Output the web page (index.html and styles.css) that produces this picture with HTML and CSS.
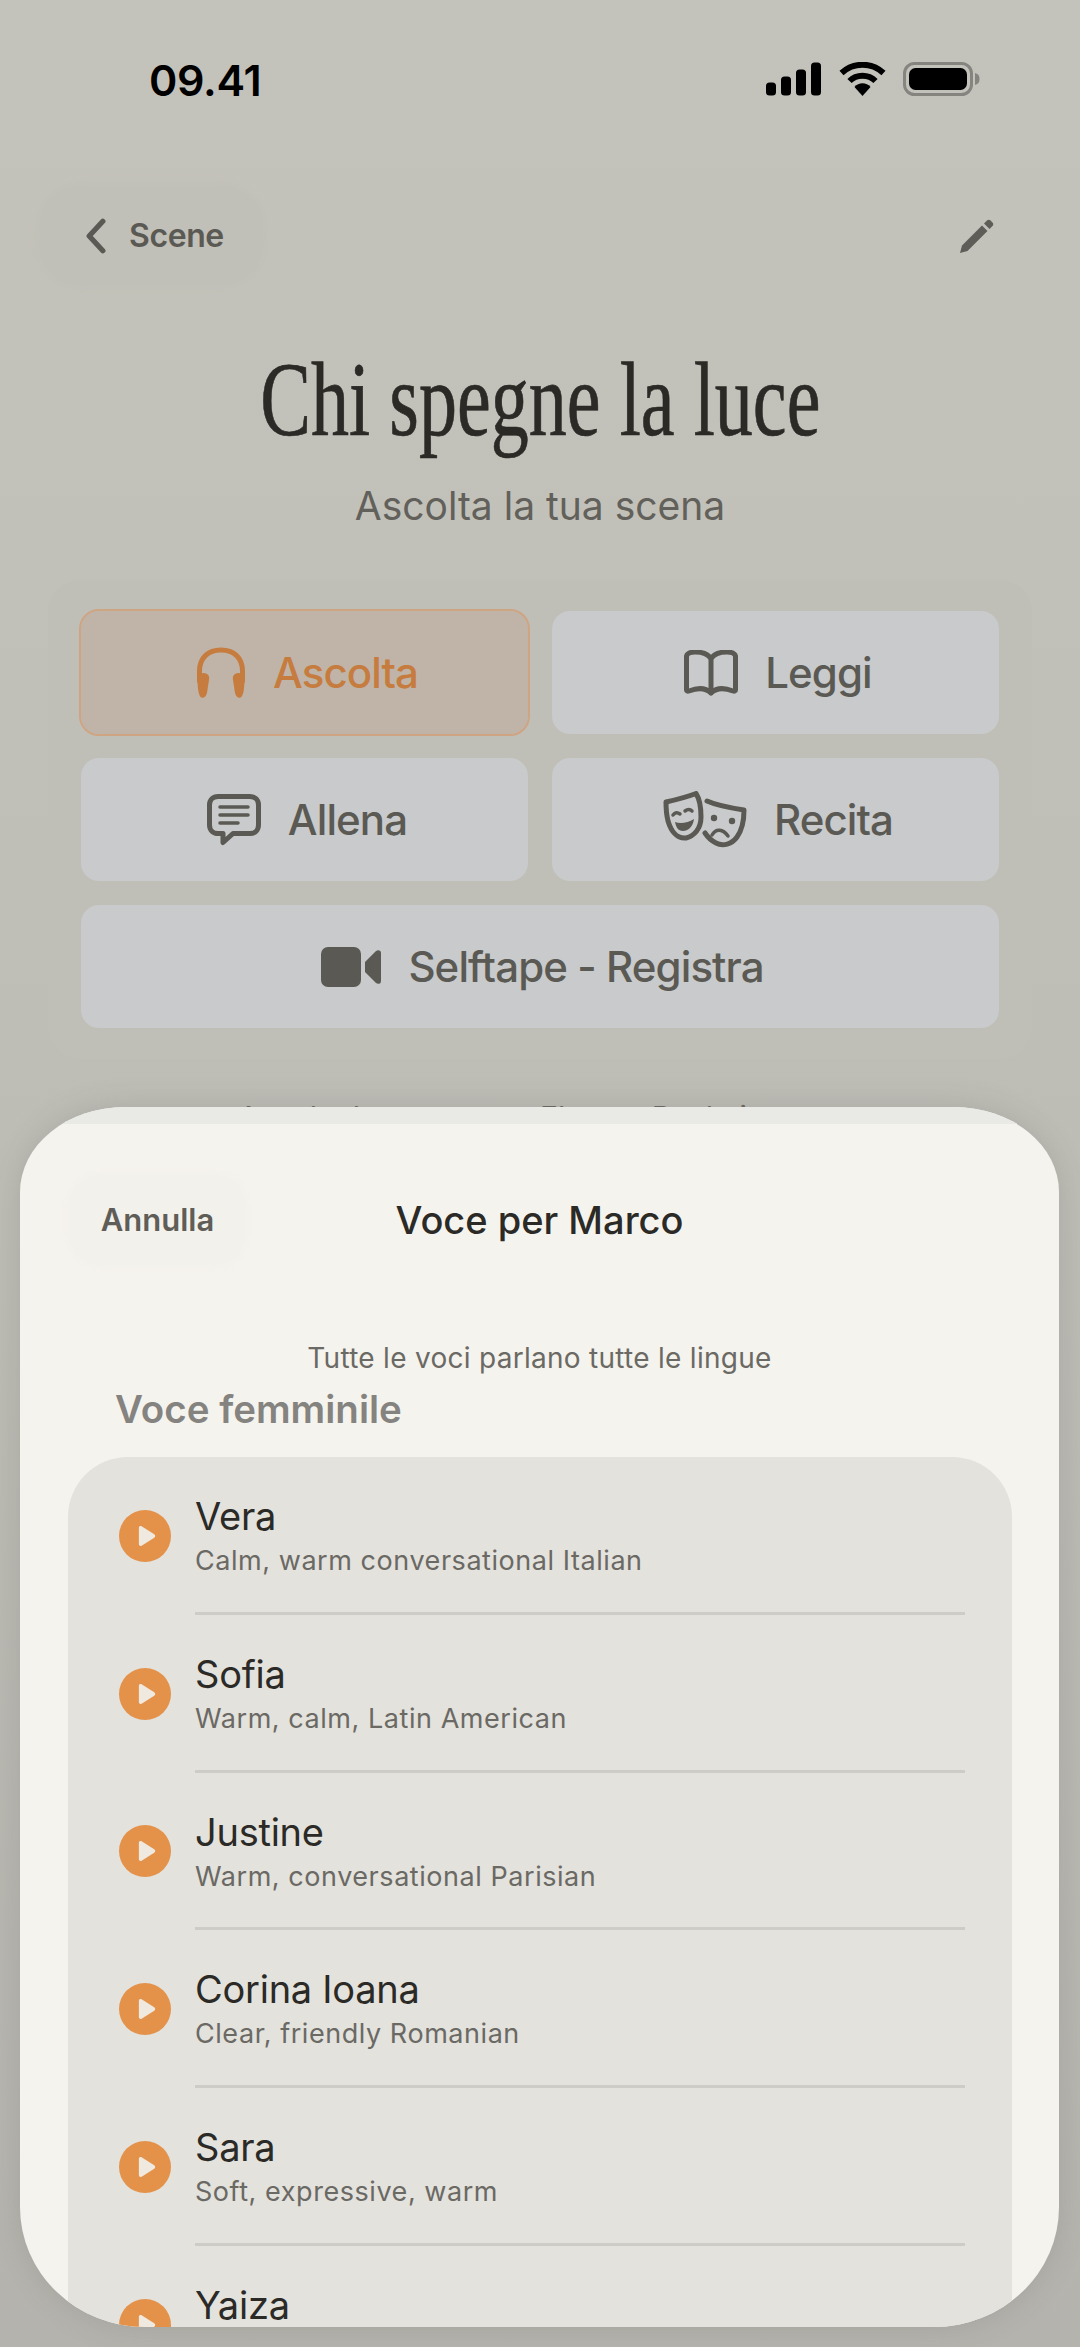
FILE: index.html
```html
<!DOCTYPE html>
<html lang="it">
<head>
    <meta charset="UTF-8">
    <title>Chi spegne la luce</title>
    <link rel="stylesheet" href="styles.css">
</head>
<body>
    <div class="status">
        <span class="time">09.41</span>
        <div class="status-icons">
            <svg class="ic-signal" viewBox="0 0 56 33"><rect x="0" y="20" width="10" height="13" rx="3.5"/><rect x="15" y="14" width="10" height="19" rx="3.5"/><rect x="30" y="7" width="10" height="26" rx="3.5"/><rect x="45" y="0" width="10" height="33" rx="3.5"/></svg>
            <svg class="ic-wifi" viewBox="0 0 48 34"><path d="M3 11 C15 0 33 0 45 11" class="wifi-arc"/><path d="M11 19 C18 12 30 12 37 19" class="wifi-arc"/><path d="M16 25 C20 20 28 20 32 25 L24 34 Z"/></svg>
            <svg class="ic-battery" viewBox="0 0 77 34"><rect x="1.5" y="1.5" width="67" height="31" rx="10" fill="none" stroke="#85847f" stroke-width="3"/><rect x="6" y="6" width="58" height="22" rx="6.5"/><path d="M72 11 C75.500 12 76.500 14 76.500 17 C76.500 20 75.500 22 72 23 Z" fill="#85847f"/></svg>
        </div>
    </div>

    <nav class="nav">
        <div class="back">
            <svg class="ic-chevron" viewBox="0 0 20 34"><path d="M17 3 L4 17 L17 31"/></svg>
            <span>Scene</span>
        </div>
        <svg class="ic-pencil" viewBox="0 0 36 36"><path d="M1 35 L3 27.500 L23 7.500 L28.500 13 L8.500 33 Z"/><path d="M25 5.500 L28 2.500 C29 1.500 30.500 1.500 31.500 2.500 L33.500 4.500 C34.500 5.500 34.500 7 33.500 8 L30.500 11 Z"/></svg>
    </nav>

    <header class="head">
        <h1><span>Chi spegne la luce</span></h1>
        <p>Ascolta la tua scena</p>
    </header>

    <main class="modes">
        <div class="mode selected">
            <svg class="ic-phones" viewBox="0 0 50 52"><path d="M3.500 34 V24 C3.500 11 12 3 25 3 C38 3 46.500 11 46.500 24 V34" class="line"/><path d="M1.500 31 C3 26 8 25 11 27 C13 28 13.500 30 13 33 L11 46 C10 50 7.500 51.500 5.500 50.500 C3 49.500 1.500 44 1.500 31 Z" class="fill"/><path d="M48.500 31 C47 26 42 25 39 27 C37 28 36.500 30 37 33 L39 46 C40 50 42.500 51.500 44.500 50.500 C47 49.500 48.500 44 48.500 31 Z" class="fill"/></svg>
            <span>Ascolta</span>
        </div>
        <div class="mode">
            <svg class="ic-book" viewBox="0 0 54 46"><path d="M27 9 C24 3 18 2 11 2 C7 2 3.500 3 2.500 6 V40 C2.500 41 3.500 41.500 5 41 C14 37.500 22 38 27 43 C32 38 40 37.500 49 41 C50.500 41.500 51.500 41 51.500 40 V6 C50.500 3 47 2 43 2 C36 2 30 3 27 9 Z M27 9 V43" class="line"/></svg>
            <span>Leggi</span>
        </div>
        <div class="mode">
            <svg class="ic-chat" viewBox="0 0 54 52"><path d="M11 2.500 H43 C48 2.500 51.500 6 51.500 11 V31 C51.500 36 48 39.500 43 39.500 H26 L16 48.500 V39.500 H11 C6 39.500 2.500 36 2.500 31 V11 C2.500 6 6 2.500 11 2.500 Z" class="line"/><path d="M13 13 H41 M13 21 H41 M13 29 H31" class="line thin"/></svg>
            <span>Allena</span>
        </div>
        <div class="mode">
            <svg class="ic-masks" viewBox="0 0 84 57"><path d="M3 11 C12 9 24 6 33 2.500 C36 7 38 16 38 26 C38 38 31 45 23 47 C14 48 8 40 5 30 C3.500 24 3 17 3 11 Z" class="line"/><path d="M44 10 C55 15 68 17 81 19 C81 28 79 39 74 46 C69 53 60 56 53 52 C47 49 44 45 42 42" class="line"/><path d="M10 24 Q13 20 17 23 M22 20 Q26 17 29 20" class="line thin"/><path d="M12 31 C17 33 25 32 31 28 C30 36 25 40 20 40 C15 40 13 36 12 31 Z" class="fill"/><circle cx="51" cy="27" r="3.200" class="fill"/><circle cx="69" cy="30" r="3.200" class="fill"/><path d="M49 44 C53 37 60 38 65 45" class="line thin"/></svg>
            <span>Recita</span>
        </div>
        <div class="mode wide">
            <svg class="ic-video" viewBox="0 0 60 40"><rect x="0" y="0" width="40" height="40" rx="7" class="fill"/><path d="M44 15 L55 4 C57 2.500 60 3 60 6 V34 C60 37 57 37.500 55 36 L44 25 Z" class="fill"/></svg>
            <span>Selftape - Registra</span>
        </div>
    </main>

    <p class="under">Ascolta la scena con Elena e Paolo in voce</p>

    <section class="sheet">
        <div class="sheet-top"></div>
        <div class="sheet-bar">
            <div class="cancel">Annulla</div>
            <h2>Voce per Marco</h2>
        </div>
        <p class="hint">Tutte le voci parlano tutte le lingue</p>
        <h3>Voce femminile</h3>

        <div class="voices">
            <div class="voice">
                <div class="play"><svg viewBox="0 0 20 24"><path d="M1 3 C1 1 2.500 0.500 4 1.200 L18 10 C19.500 11 19.500 13 18 14 L4 22.800 C2.500 23.500 1 23 1 21 Z"/></svg></div>
                <div class="voice-text">
                    <div class="voice-name">Vera</div>
                    <div class="voice-desc">Calm, warm conversational Italian</div>
                </div>
            </div>
            <div class="voice">
                <div class="play"><svg viewBox="0 0 20 24"><path d="M1 3 C1 1 2.500 0.500 4 1.200 L18 10 C19.500 11 19.500 13 18 14 L4 22.800 C2.500 23.500 1 23 1 21 Z"/></svg></div>
                <div class="voice-text">
                    <div class="voice-name">Sofia</div>
                    <div class="voice-desc">Warm, calm, Latin American</div>
                </div>
            </div>
            <div class="voice">
                <div class="play"><svg viewBox="0 0 20 24"><path d="M1 3 C1 1 2.500 0.500 4 1.200 L18 10 C19.500 11 19.500 13 18 14 L4 22.800 C2.500 23.500 1 23 1 21 Z"/></svg></div>
                <div class="voice-text">
                    <div class="voice-name">Justine</div>
                    <div class="voice-desc">Warm, conversational Parisian</div>
                </div>
            </div>
            <div class="voice">
                <div class="play"><svg viewBox="0 0 20 24"><path d="M1 3 C1 1 2.500 0.500 4 1.200 L18 10 C19.500 11 19.500 13 18 14 L4 22.800 C2.500 23.500 1 23 1 21 Z"/></svg></div>
                <div class="voice-text">
                    <div class="voice-name">Corina Ioana</div>
                    <div class="voice-desc">Clear, friendly Romanian</div>
                </div>
            </div>
            <div class="voice">
                <div class="play"><svg viewBox="0 0 20 24"><path d="M1 3 C1 1 2.500 0.500 4 1.200 L18 10 C19.500 11 19.500 13 18 14 L4 22.800 C2.500 23.500 1 23 1 21 Z"/></svg></div>
                <div class="voice-text">
                    <div class="voice-name">Sara</div>
                    <div class="voice-desc">Soft, expressive, warm</div>
                </div>
            </div>
            <div class="voice">
                <div class="play"><svg viewBox="0 0 20 24"><path d="M1 3 C1 1 2.500 0.500 4 1.200 L18 10 C19.500 11 19.500 13 18 14 L4 22.800 C2.500 23.500 1 23 1 21 Z"/></svg></div>
                <div class="voice-text">
                    <div class="voice-name">Yaiza</div>
                </div>
            </div>
        </div>
    </section>
</body>
</html>
```

FILE: styles.css
```css
html, body {
    margin: 0;
    padding: 0;
}

body {
    position: relative;
    width: 1080px;
    height: 2347px;
    overflow: hidden;
    font-family: Inter, "Liberation Sans", sans-serif;
    color: #5b5953;
    background: linear-gradient(#c4c3bb 0, #c2c1b9 25%, #bdbcb5 50%, #b4b3ad 100%);
}

h1, h2, h3, p {
    margin: 0;
    font-weight: normal;
}

/* status bar */
.status {
    height: 160px;
    padding: 0 100px 0 149px;
    display: flex;
    align-items: center;
    justify-content: space-between;
}

.time {
    font-size: 43px;
    font-weight: 600;
    letter-spacing: -0.3px;
    color: #000;
}

.status-icons {
    display: flex;
    align-items: center;
    gap: 16px;
    margin-top: -2px;
}

.status-icons svg {
    display: block;
    height: 34px;
    fill: #000;
}

.ic-signal { width: 56px; }
.ic-wifi { width: 49px; }
.ic-battery { width: 77px; }

.wifi-arc {
    fill: none;
    stroke: #000;
    stroke-width: 6;
}

/* nav */
.nav {
    height: 105px;
    margin-top: 23px;
    padding: 0 85px 0 40px;
    display: flex;
    align-items: center;
    justify-content: space-between;
}

.back {
    width: 222px;
    height: 97px;
    box-sizing: border-box;
    padding-left: 45px;
    display: flex;
    align-items: center;
    gap: 23px;
    font-size: 32px;
    font-weight: 600;
    letter-spacing: -0.4px;
    background: #c0bfb8;
    border-radius: 40px;
    box-shadow: 0 0 10px 3px #c0bfb8;
}

.ic-chevron {
    width: 21px;
    height: 36px;
    fill: none;
    stroke: #5b5953;
    stroke-width: 5;
    stroke-linecap: round;
    stroke-linejoin: round;
}

.ic-pencil {
    width: 36px;
    height: 36px;
    fill: #5f5d57;
}

/* title */
.head {
    text-align: center;
    margin-top: 48px;
}

.head h1 {
    height: 128px;
    line-height: 128px;
    font-family: "Liberation Serif", serif;
    font-size: 105px;
    color: #2b2a26;
    white-space: nowrap;
    -webkit-text-stroke: 0.7px #2b2a26;
}

.head h1 span {
    display: inline-block;
    transform: scaleX(0.725);
}

.head p {
    margin-top: 18px;
    font-size: 39px;
    line-height: 48px;
    color: #62605a;
}

/* mode buttons */
.modes {
    width: 984px;
    box-sizing: border-box;
    margin: 50px 0 0 48px;
    padding: 31px 33px 31px 33px;
    display: grid;
    grid-template-columns: 1fr 1fr;
    gap: 24px;
    background: #bfbeb7;
    border-radius: 32px;
}

.mode {
    height: 123px;
    padding-left: 5px;
    display: flex;
    align-items: center;
    justify-content: center;
    gap: 27px;
    font-size: 42px;
    font-weight: 500;
    letter-spacing: -0.9px;
    background: #c8cacb;
    border-radius: 18px;
}

.mode .line {
    fill: none;
    stroke: #5b5953;
    stroke-width: 5;
    stroke-linecap: round;
    stroke-linejoin: round;
}

.mode .line.thin {
    stroke-width: 3.5;
}

.mode .fill {
    fill: #5b5953;
}

.mode.selected {
    color: #c67c3e;
    background: #c0b4a8;
    outline: 2px solid #cfa483;
}

.mode.selected .line {
    stroke: #c67c3e;
}

.mode.selected .fill {
    fill: #c67c3e;
}

.wide {
    grid-column: 1 / 3;
}

.ic-phones { width: 50px; height: 52px; }
.ic-book { width: 54px; height: 46px; }
.ic-chat { width: 54px; height: 52px; }
.ic-masks { width: 84px; height: 57px; }
.ic-video { width: 60px; height: 40px; }

.under {
    margin-top: 40px;
    text-align: center;
    font-size: 30px;
    color: #6b6964;
}

/* voice sheet */
.sheet {
    position: absolute;
    left: 20px;
    top: 1107px;
    width: 1039px;
    height: 1220px;
    overflow: hidden;
    background: #f5f3ee;
    border-radius: 105px 105px 125px 125px / 85px 85px 120px 120px;
    box-shadow: 0 0 30px rgba(90, 90, 85, 0.18);
}

.sheet-top {
    height: 17px;
    background: #e9e9e6;
}

.sheet-bar {
    position: relative;
    height: 90px;
    margin-top: 51px;
    display: flex;
    align-items: center;
    justify-content: center;
}

.cancel {
    position: absolute;
    left: 50px;
    top: 0;
    width: 175px;
    height: 90px;
    line-height: 90px;
    text-align: center;
    font-size: 31px;
    font-weight: 600;
    color: #5f5d57;
    background: #f3f1ec;
    border-radius: 30px;
    box-shadow: 0 0 8px 2px #f3f1ec;
}

.sheet h2 {
    font-size: 38px;
    font-weight: 500;
    color: #2b2a26;
}

.hint {
    margin-top: 76px;
    text-align: center;
    font-size: 28px;
    line-height: 34px;
    letter-spacing: 0.28px;
    color: #6b6964;
}

.sheet h3 {
    margin: 10px 0 0 95px;
    font-size: 38.500px;
    line-height: 48px;
    font-weight: 600;
    color: #85837f;
}

.voices {
    margin: 24px 47px 0 48px;
    background: #e3e2dd;
    border-radius: 60px 60px 0 0;
}

.voice {
    height: 157.750px;
    padding: 0 47px 0 51px;
    display: flex;
    align-items: center;
    gap: 24px;
}

.play {
    flex: none;
    width: 52px;
    height: 52px;
    border-radius: 50%;
    background: #e4924a;
    display: flex;
    align-items: center;
    justify-content: center;
}

.play svg {
    width: 18px;
    height: 22px;
    margin-left: 3px;
    fill: #efe9e0;
}

.voice-text {
    flex: 1;
    height: 100%;
    box-sizing: border-box;
    padding-top: 39px;
    border-bottom: 3px solid #cdccc7;
}

.voice:last-child .voice-text {
    border-bottom: none;
}

.voice-name {
    font-size: 38px;
    line-height: 40px;
    letter-spacing: -0.25px;
    color: #2b2a26;
}

.voice-desc {
    margin-top: 6px;
    font-size: 27px;
    line-height: 38px;
    letter-spacing: 0.55px;
    color: #6b6964;
}
```
